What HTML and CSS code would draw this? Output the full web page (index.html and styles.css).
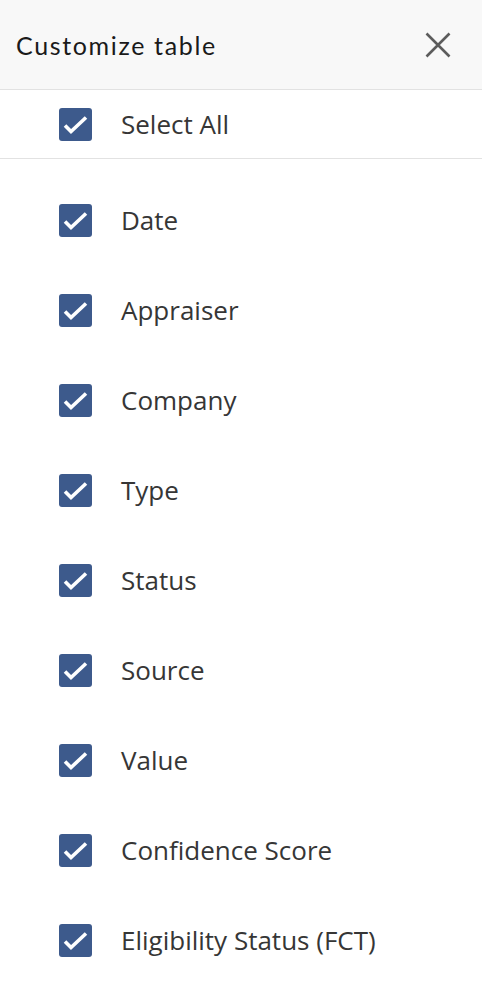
FILE: index.html
```html
<!DOCTYPE html>
<html>
<head>
<meta charset="utf-8">
<link rel="stylesheet" href="styles.css">
</head>
<body>
<div class="panel">
  <header class="panel-header">
    <h1 class="title">Customize table</h1>
    <button class="close" aria-label="Close">
      <svg width="26" height="26" viewBox="0 0 26 26"><path d="M1.5 1.5 L24.5 24.5 M24.5 1.5 L1.5 24.5" stroke="#5c5c5c" stroke-width="2.6" fill="none"/></svg>
    </button>
  </header>
  <div class="select-all">
    <label class="row">
      <span class="box"><svg width="33" height="33" viewBox="0 0 33 33"><path d="M6 17.5 L12 23.5 L27 9.5" stroke="#fff" stroke-width="3.6" fill="none" stroke-linejoin="miter"/></svg></span>
      <span class="label">Select All</span>
    </label>
  </div>
  <ul class="list">
    <li class="row item"><span class="box"><svg width="33" height="33" viewBox="0 0 33 33"><path d="M6 17.5 L12 23.5 L27 9.5" stroke="#fff" stroke-width="3.6" fill="none" stroke-linejoin="miter"/></svg></span><span class="label">Date</span></li>
    <li class="row item"><span class="box"><svg width="33" height="33" viewBox="0 0 33 33"><path d="M6 17.5 L12 23.5 L27 9.5" stroke="#fff" stroke-width="3.6" fill="none" stroke-linejoin="miter"/></svg></span><span class="label">Appraiser</span></li>
    <li class="row item"><span class="box"><svg width="33" height="33" viewBox="0 0 33 33"><path d="M6 17.5 L12 23.5 L27 9.5" stroke="#fff" stroke-width="3.6" fill="none" stroke-linejoin="miter"/></svg></span><span class="label">Company</span></li>
    <li class="row item"><span class="box"><svg width="33" height="33" viewBox="0 0 33 33"><path d="M6 17.5 L12 23.5 L27 9.5" stroke="#fff" stroke-width="3.6" fill="none" stroke-linejoin="miter"/></svg></span><span class="label">Type</span></li>
    <li class="row item"><span class="box"><svg width="33" height="33" viewBox="0 0 33 33"><path d="M6 17.5 L12 23.5 L27 9.5" stroke="#fff" stroke-width="3.6" fill="none" stroke-linejoin="miter"/></svg></span><span class="label">Status</span></li>
    <li class="row item"><span class="box"><svg width="33" height="33" viewBox="0 0 33 33"><path d="M6 17.5 L12 23.5 L27 9.5" stroke="#fff" stroke-width="3.6" fill="none" stroke-linejoin="miter"/></svg></span><span class="label">Source</span></li>
    <li class="row item"><span class="box"><svg width="33" height="33" viewBox="0 0 33 33"><path d="M6 17.5 L12 23.5 L27 9.5" stroke="#fff" stroke-width="3.6" fill="none" stroke-linejoin="miter"/></svg></span><span class="label">Value</span></li>
    <li class="row item"><span class="box"><svg width="33" height="33" viewBox="0 0 33 33"><path d="M6 17.5 L12 23.5 L27 9.5" stroke="#fff" stroke-width="3.6" fill="none" stroke-linejoin="miter"/></svg></span><span class="label">Confidence Score</span></li>
    <li class="row item"><span class="box"><svg width="33" height="33" viewBox="0 0 33 33"><path d="M6 17.5 L12 23.5 L27 9.5" stroke="#fff" stroke-width="3.6" fill="none" stroke-linejoin="miter"/></svg></span><span class="label">Eligibility Status (FCT)</span></li>
  </ul>
</div>
</body>
</html>
```
FILE: styles.css
```css
html, body {
  margin: 0;
  padding: 0;
  background: #fff;
}
.panel {
  width: 482px;
  height: 1005px;
  background: #fff;
  font-family: "Open Sans", "Liberation Sans", sans-serif;
  color: #333;
}
.panel-header {
  height: 90px;
  box-sizing: border-box;
  background: #f8f8f8;
  border-bottom: 1px solid #e2e2e2;
  display: flex;
  align-items: center;
  justify-content: space-between;
  padding: 0 31px 0 16px;
}
.title {
  margin: 0;
  font-family: "Lato", "Liberation Sans", sans-serif;
  font-weight: 400;
  font-size: 25px;
  color: #1a1a1a;
  letter-spacing: 1.65px;
}
.close {
  border: 0;
  background: none;
  padding: 0;
  width: 26px;
  height: 26px;
  display: flex;
  cursor: pointer;
}
.select-all {
  height: 69px;
  box-sizing: border-box;
  border-bottom: 1px solid #e2e2e2;
  display: flex;
  align-items: center;
}
.row {
  display: flex;
  align-items: center;
  padding-left: 59px;
}
.box {
  width: 33px;
  height: 33px;
  background: #3d5a8c;
  border-radius: 3px;
  display: flex;
  flex-shrink: 0;
}
.label {
  margin-left: 29px;
  font-size: 26px;
  color: #363636;
}
.list {
  list-style: none;
  margin: 0;
  padding: 16px 0 0;
}
.item {
  height: 90px;
}
```
